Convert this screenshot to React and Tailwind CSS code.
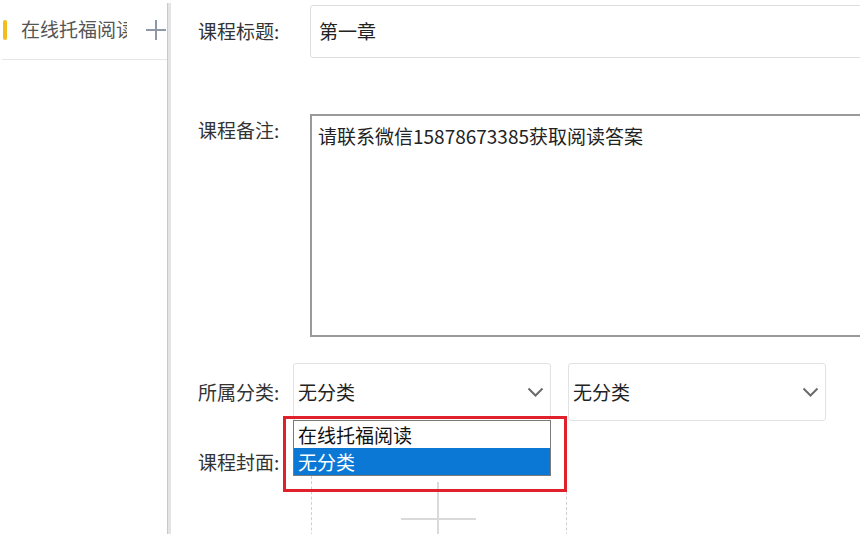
const font = { fontFamily: '"Microsoft YaHei", "Noto Sans CJK SC", "Noto Sans", sans-serif' };

// Little chevron used by the two category selects
function Chevron() {
    return (
        <svg width="17" height="10" viewBox="0 0 17 10" className="shrink-0">
            <polyline points="1.5,1.5 8.5,8.5 15.5,1.5" fill="none" stroke="#6b6b6b" strokeWidth="2" />
        </svg>
    );
}

function Select({ value, className = '' }) {
    return (
        <div className={`flex h-[58px] w-[258px] shrink-0 items-center justify-between rounded-[3px] border border-[#e2e2e2] bg-white pl-[4px] pr-[6px] ${className}`}>
            <span className="text-[19px] text-[#222]">{value}</span>
            <Chevron />
        </div>
    );
}

function Label({ children, className = '' }) {
    return (
        <span className={`w-[86px] shrink-0 whitespace-nowrap text-[19px] ${className}`}>{children}</span>
    );
}

export default function App() {
    return (
        <div style={font} className="flex h-[534px] w-[860px] overflow-hidden bg-white">
            {/* Sidebar with category tabs */}
            <div className="w-[167px] shrink-0">
                <div className="ml-[2px] flex h-[60px] items-center border-b border-[#e6e6e6]">
                    <div className="ml-[1px] h-[20px] w-[5px] rounded-[2px] bg-[#f4bd1f]" />
                    <div className="ml-[14px] w-[106px] shrink-0 overflow-hidden whitespace-nowrap text-[19px] text-[#555]">
                        在线托福阅读
                    </div>
                    <svg width="22" height="22" viewBox="0 0 22 22" className="ml-[18px] shrink-0">
                        <path d="M11 1v20M1 11h20" stroke="#8e98a8" strokeWidth="2" />
                    </svg>
                </div>
            </div>

            {/* Divider */}
            <div className="mt-[3px] w-[4px] shrink-0 border-l border-[#c9c9c9] bg-[#e4e4e4]" />

            {/* Form */}
            <div className="relative flex-1 pl-[27px] pt-[5px] text-[#333]">
                <div className="flex h-[53px] items-center">
                    <Label>课程标题:</Label>
                    <div className="ml-[26px] flex h-[53px] w-[600px] shrink-0 items-center rounded-[3px] border border-[#dedede] pl-[8px] text-[19px] text-[#222]">
                        第一章
                    </div>
                </div>

                <div className="mt-[56px] flex items-start">
                    <Label className="mt-[3px] leading-[26px]">课程备注:</Label>
                    <div className="ml-[26px] h-[223px] w-[600px] shrink-0 border-2 border-[#9a9a9a] pl-[6px] pt-[7px] text-[19px] leading-[26px] text-[#222]">
                        请联系微信15878673385获取阅读答案
                    </div>
                </div>

                <div className="mt-[26px] flex items-center">
                    <Label>所属分类:</Label>
                    <Select value="无分类" className="ml-[9px]" />
                    <Select value="无分类" className="ml-[17px]" />
                </div>

                <div className="mt-[28px] flex items-center">
                    <Label className="leading-[26px]">课程封面:</Label>
                </div>

                {/* Upload area, top hidden under the open list */}
                <div className="absolute left-[140px] top-[476px] h-[70px] w-[256px] border-x border-dashed border-[#cfcfcf]">
                    <div className="absolute left-[125px] top-[6px] h-[70px] w-[2px] bg-[#dadada]" />
                    <div className="absolute left-[89px] top-[42px] h-[2px] w-[75px] bg-[#dadada]" />
                </div>

                {/* Open select list */}
                <div className="absolute left-[122px] top-[420px] w-[258px] border border-[#7a7a7a] bg-white text-[19px] leading-[27px]">
                    <div className="pl-[4px] text-[#111]">在线托福阅读</div>
                    <div className="bg-[#0a78d4] pl-[4px] text-white">无分类</div>
                </div>

                {/* Highlight frame */}
                <div className="absolute left-[112px] top-[416px] h-[76px] w-[284px] border-[3px] border-[#e0202b]" />
            </div>
        </div>
    );
}
